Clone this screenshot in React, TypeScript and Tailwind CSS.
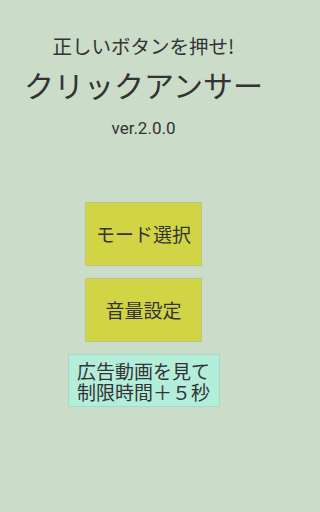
export default function App() {
  return (
    <div className="min-h-[512px] w-full bg-[#cbdcc9]">
      <div
        className="flex h-[512px] w-[287px] flex-col items-center bg-[#cbdcc9] pt-[34px] text-[#333333]"
        style={{ fontFamily: '"Noto Sans CJK JP", "Noto Sans", sans-serif' }}
      >
        {/* Title */}
        <p className="text-[19.5px] leading-[24px]">正しいボタンを押せ!</p>
        <h1 className="mt-[8px] text-[30px] leading-[36px]">クリックアンサー</h1>
        <p className="mt-[16px] font-['Roboto',sans-serif] text-[17px] leading-[20px]">ver.2.0.0</p>

        {/* Menu */}
        <button className="mt-[64px] flex h-[64px] w-[117px] items-center justify-center border border-[#bcc48a] bg-[#d1d545] text-[19px] leading-[24px] text-[#333333]">
          モード選択
        </button>
        <button className="mt-[12px] flex h-[64px] w-[117px] items-center justify-center border border-[#bcc48a] bg-[#d1d545] text-[19px] leading-[24px] text-[#333333]">
          音量設定
        </button>
        <button className="mt-[12px] flex h-[53px] w-[152px] flex-col items-center justify-center border border-[#a9d9c6] bg-[#b3eedb] text-[19px] leading-[21px] text-[#333333]">
          <span>広告動画を見て</span>
          <span>制限時間＋５秒</span>
        </button>
      </div>
    </div>
  );
}
